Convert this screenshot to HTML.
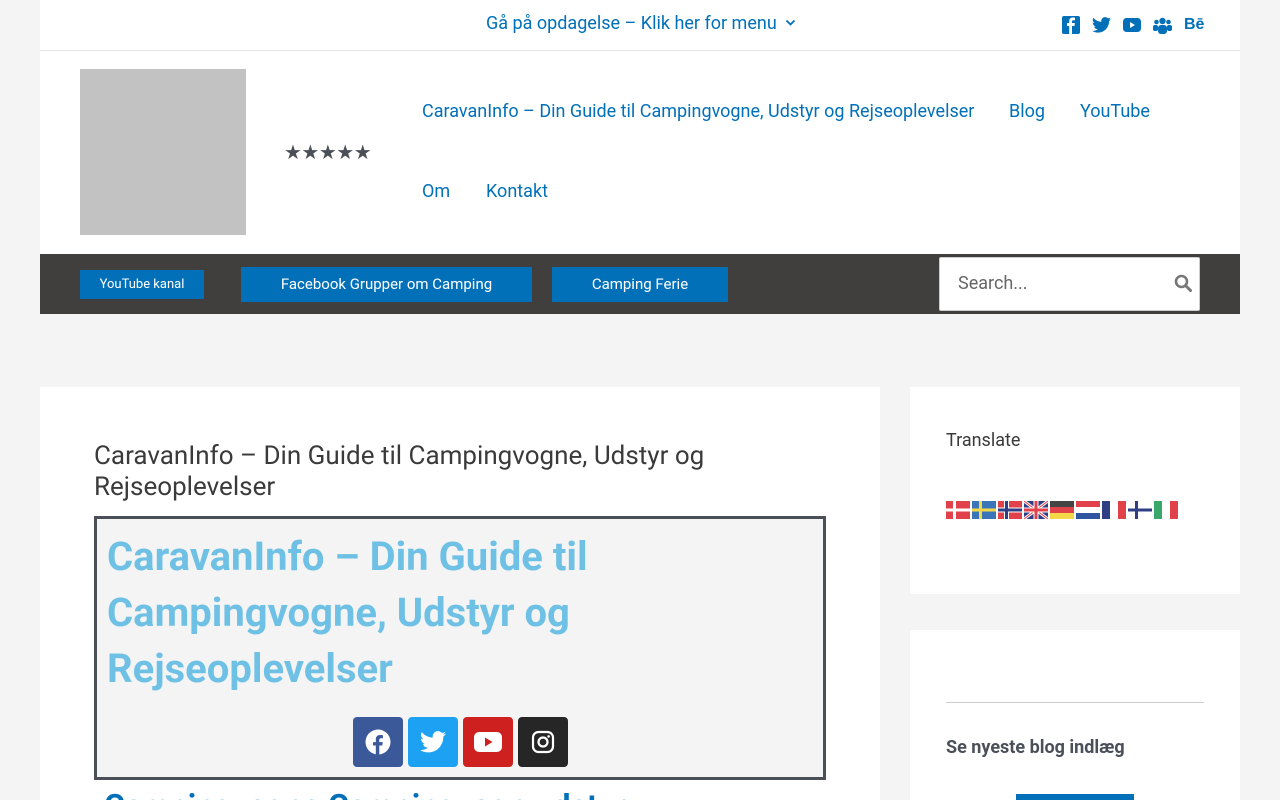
<!DOCTYPE html>
<html style="width:1280px;height:800px;overflow:hidden"><head><meta charset="utf-8"><style>
*{box-sizing:border-box;margin:0;padding:0}
html,body{width:1280px;height:800px;overflow:hidden}
body{background:#f4f4f4;font-family:"Roboto","Liberation Sans",sans-serif;color:#3a3a3a;position:relative}
.a{position:absolute}
a{color:#0170b9;text-decoration:none}
.btn{position:absolute;background:#0170b9;color:#fff;text-align:center;font-size:15px}
.sb{position:absolute;top:717px;width:50px;height:50px;border-radius:4px;display:flex;align-items:center;justify-content:center}
.fl{display:inline-block;width:24px;height:18px;margin-right:2px}
</style></head><body>
<div class="a" style="left:40px;top:0;width:1200px;height:254px;background:#fff"></div>
<div class="a" style="left:40px;top:50px;width:1200px;height:1px;background:#e5e5e5"></div>
<div class="a" style="left:486px;top:13px;font-size:18px;color:#0170b9;white-space:nowrap">Gå på opdagelse – Klik her for menu <svg width="11" height="8" viewBox="0 0 11 8" style="margin-left:4px;vertical-align:2px"><path d="M1.5 1.5l4 4 4-4" fill="none" stroke="#0170b9" stroke-width="1.8"/></svg></div>
<div class="a" style="left:1062px;top:16px;display:flex;gap:12px;align-items:center;color:#0170b9">
<svg width="18" height="18" viewBox="0 0 18 18"><rect width="18" height="18" rx="2" fill="#0170b9"/><path d="M10 18V10h2.5l.4-3H10V5.5c0-.8.3-1.3 1.4-1.3H13V1.6c-.3 0-1.2-.1-2.2-.1C8.6 1.5 7.2 2.8 7.2 5.2V7H5v3h2.2v8z" fill="#fff"/></svg>
<svg width="19" height="16" viewBox="0 0 24 20"><path d="M24 2.4c-.9.4-1.8.7-2.8.8 1-.6 1.8-1.6 2.2-2.700-1 .6-2 1-3.1 1.2C19.3.7 18 0 16.6 0c-2.7 0-4.9 2.2-4.9 4.9 0 .4 0 .8.1 1.1C7.7 5.8 4.1 3.9 1.7.9c-.4.7-.7 1.6-.7 2.5 0 1.7.9 3.2 2.2 4.1-.8 0-1.600-.2-2.2-.6v.1c0 2.4 1.7 4.4 3.9 4.8-.4.1-.8.2-1.3.2-.3 0-.6 0-.9-.1.6 2 2.4 3.4 4.6 3.4-1.7 1.3-3.8 2.1-6.1 2.1-.4 0-.8 0-1.2-.1C2.2 18.8 4.8 19.6 7.5 19.6c9.1 0 14-7.5 14-14v-.6c1-.7 1.8-1.6 2.5-2.6z" fill="#0170b9"/></svg>
<svg width="18" height="14" viewBox="0 0 18 14"><rect width="18" height="14" rx="3.5" fill="#0170b9"/><path d="M7 4v6l5-3z" fill="#fff"/></svg>
<svg width="19" height="17" viewBox="0 0 19 17"><circle cx="9.5" cy="4" r="3.2" fill="#0170b9"/><circle cx="3.5" cy="5" r="2.3" fill="#0170b9"/><circle cx="15.5" cy="5" r="2.3" fill="#0170b9"/><rect x="5" y="8" width="9" height="9" rx="3" fill="#0170b9"/><rect x="0" y="8" width="5" height="6" rx="2" fill="#0170b9"/><rect x="14" y="8" width="5" height="6" rx="2" fill="#0170b9"/></svg>
<span style="font-weight:bold;font-size:16px;font-family:'Liberation Sans',sans-serif">Bē</span>
</div>
<div class="a" style="left:80px;top:69px;width:166px;height:166px;background:#c2c2c2"></div>
<div class="a" style="left:284px;top:140px;font-size:20px;color:#4b4f58;letter-spacing:-0.5px">★★★★★</div>
<div class="a" style="left:422px;top:101px;font-size:18px;color:#0170b9;white-space:nowrap">CaravanInfo – Din Guide til Campingvogne, Udstyr og Rejseoplevelser</div>
<div class="a" style="left:1009px;top:101px;font-size:18px;color:#0170b9">Blog</div>
<div class="a" style="left:1080px;top:101px;font-size:18px;color:#0170b9">YouTube</div>
<div class="a" style="left:422px;top:181px;font-size:18px;color:#0170b9">Om</div>
<div class="a" style="left:486px;top:181px;font-size:18px;color:#0170b9">Kontakt</div>
<div class="a" style="left:40px;top:254px;width:1200px;height:60px;background:#403f3e"></div>
<div class="btn" style="left:80px;top:270px;width:124px;height:29px;line-height:29px;font-size:13px">YouTube kanal</div>
<div class="btn" style="left:241px;top:267px;width:291px;height:35px;line-height:35px">Facebook Grupper om Camping</div>
<div class="btn" style="left:552px;top:267px;width:176px;height:35px;line-height:35px">Camping Ferie</div>
<div class="a" style="left:939px;top:257px;width:261px;height:54px;background:#fff;border:1px solid #ccc;border-radius:2px"></div>
<div class="a" style="left:958px;top:273px;font-size:18px;color:#666">Search...</div>
<svg class="a" style="left:1174px;top:274px" width="18" height="18" viewBox="0 0 18 18"><circle cx="7.5" cy="7.5" r="5.5" fill="none" stroke="#777" stroke-width="2.6"/><path d="M11.5 11.5l5 5" stroke="#777" stroke-width="3" stroke-linecap="round"/></svg>
<div class="a" style="left:40px;top:387px;width:840px;height:413px;background:#fff"></div>
<div class="a" style="left:94px;top:441px;width:700px;font-size:26px;line-height:31px;color:#3a3a3a">CaravanInfo – Din Guide til Campingvogne, Udstyr og Rejseoplevelser</div>
<div class="a" style="left:94px;top:516px;width:732px;height:264px;background:#f4f4f4;border:3px solid #4b4f58"></div>
<div class="a" style="left:107px;top:529px;width:600px;font-size:40px;line-height:56px;font-weight:bold;color:#6ec1e4">CaravanInfo – Din Guide til Campingvogne, Udstyr og Rejseoplevelser</div>
<div class="sb" style="left:353px;background:#3b5998"><svg width="26" height="26" viewBox="0 0 26 26"><circle cx="13" cy="13" r="12.5" fill="#fff"/><path d="M14.3 26V16.5h3l.5-3.4h-3.5v-2.2c0-1 .4-1.7 1.8-1.7h1.8V6.2c-.4 0-1.4-.2-2.7-.2-2.7 0-4.4 1.6-4.4 4.6v2.5H8v3.4h2.8V26z" fill="#3b5998"/></svg></div>
<div class="sb" style="left:408px;background:#1da1f2"><svg width="26" height="22" viewBox="0 0 24 20"><path d="M24 2.4c-.9.4-1.8.7-2.8.8 1-.6 1.8-1.6 2.2-2.7-1 .6-2 1-3.1 1.2C19.3.7 18 0 16.6 0c-2.7 0-4.9 2.2-4.9 4.9 0 .4 0 .8.1 1.1C7.7 5.8 4.1 3.9 1.7.9c-.4.7-.7 1.6-.7 2.5 0 1.7.9 3.2 2.2 4.1-.8 0-1.6-.2-2.2-.6v.1c0 2.4 1.7 4.4 3.9 4.8-.4.1-.8.2-1.3.2-.3 0-.6 0-.9-.1.6 2 2.4 3.4 4.6 3.4-1.7 1.3-3.8 2.1-6.1 2.1-.4 0-.8 0-1.2-.1C2.2 18.8 4.8 19.6 7.5 19.6c9.1 0 14-7.5 14-14v-.6c1-.7 1.8-1.6 2.5-2.6z" fill="#fff"/></svg></div>
<div class="sb" style="left:463px;background:#cd201f"><svg width="28" height="20" viewBox="0 0 28 20"><rect width="28" height="20" rx="5" fill="#fff"/><path d="M11 5.5v9l7.5-4.5z" fill="#cd201f"/></svg></div>
<div class="sb" style="left:518px;background:#262626"><svg width="24" height="24" viewBox="0 0 24 24"><rect x="2" y="2" width="20" height="20" rx="5.5" fill="none" stroke="#fff" stroke-width="2.2"/><circle cx="12" cy="12" r="4.5" fill="none" stroke="#fff" stroke-width="2.2"/><circle cx="17.6" cy="6.4" r="1.3" fill="#fff"/></svg></div>
<div class="a" style="left:104px;top:786px;font-size:32px;font-weight:bold;color:#0170b9;line-height:40px;white-space:nowrap">Campingvogne Campingvogn udstyr</div>
<div class="a" style="left:910px;top:387px;width:330px;height:207px;background:#fff"></div>
<div class="a" style="left:946px;top:430px;font-size:18px;color:#3a3a3a">Translate</div>
<div class="a" style="left:946px;top:501px;display:flex">
<svg class="fl" viewBox="0 0 24 18"><rect width="24" height="18" fill="#e0414a"/><rect x="7" width="3" height="18" fill="#fff"/><rect y="7.5" width="24" height="3" fill="#fff"/></svg>
<svg class="fl" viewBox="0 0 24 18"><rect width="24" height="18" fill="#3a75b8"/><rect x="7" width="3" height="18" fill="#f5d84a"/><rect y="7.5" width="24" height="3" fill="#f5d84a"/></svg>
<svg class="fl" viewBox="0 0 24 18"><rect width="24" height="18" fill="#e0414a"/><rect x="6" width="5" height="18" fill="#fff"/><rect y="6.5" width="24" height="5" fill="#fff"/><rect x="7" width="3" height="18" fill="#2f3f85"/><rect y="7.5" width="24" height="3" fill="#2f3f85"/></svg>
<svg class="fl" viewBox="0 0 24 18"><rect width="24" height="18" fill="#2f3f85"/><path d="M0 0L24 18M24 0L0 18" stroke="#fff" stroke-width="3"/><path d="M0 0L24 18M24 0L0 18" stroke="#e0414a" stroke-width="1"/><rect x="9.5" width="5" height="18" fill="#fff"/><rect y="6.5" width="24" height="5" fill="#fff"/><rect x="10.5" width="3" height="18" fill="#e0414a"/><rect y="7.5" width="24" height="3" fill="#e0414a"/></svg>
<svg class="fl" viewBox="0 0 24 18"><rect width="24" height="6" fill="#444"/><rect y="6" width="24" height="6" fill="#e0414a"/><rect y="12" width="24" height="6" fill="#f5d84a"/></svg>
<svg class="fl" viewBox="0 0 24 18"><rect width="24" height="6" fill="#e0414a"/><rect y="6" width="24" height="6" fill="#fff"/><rect y="12" width="24" height="6" fill="#2f55a0"/></svg>
<svg class="fl" viewBox="0 0 24 18"><rect width="8" height="18" fill="#2f3f85"/><rect x="8" width="8" height="18" fill="#fff"/><rect x="16" width="8" height="18" fill="#e0414a"/></svg>
<svg class="fl" viewBox="0 0 24 18"><rect width="24" height="18" fill="#fff"/><rect x="7" width="3" height="18" fill="#2f3f85"/><rect y="7.5" width="24" height="3" fill="#2f3f85"/></svg>
<svg class="fl" viewBox="0 0 24 18"><rect width="8" height="18" fill="#3aa86b"/><rect x="8" width="8" height="18" fill="#fff"/><rect x="16" width="8" height="18" fill="#e0414a"/></svg>
</div>
<div class="a" style="left:910px;top:630px;width:330px;height:170px;background:#fff"></div>
<div class="a" style="left:946px;top:702px;width:258px;height:1px;background:#ccc"></div>
<div class="a" style="left:946px;top:737px;font-size:18px;font-weight:bold;color:#4b4f58">Se nyeste blog indlæg</div>
<div class="a" style="left:1016px;top:794px;width:118px;height:6px;background:#0170b9"></div>
</body></html>
